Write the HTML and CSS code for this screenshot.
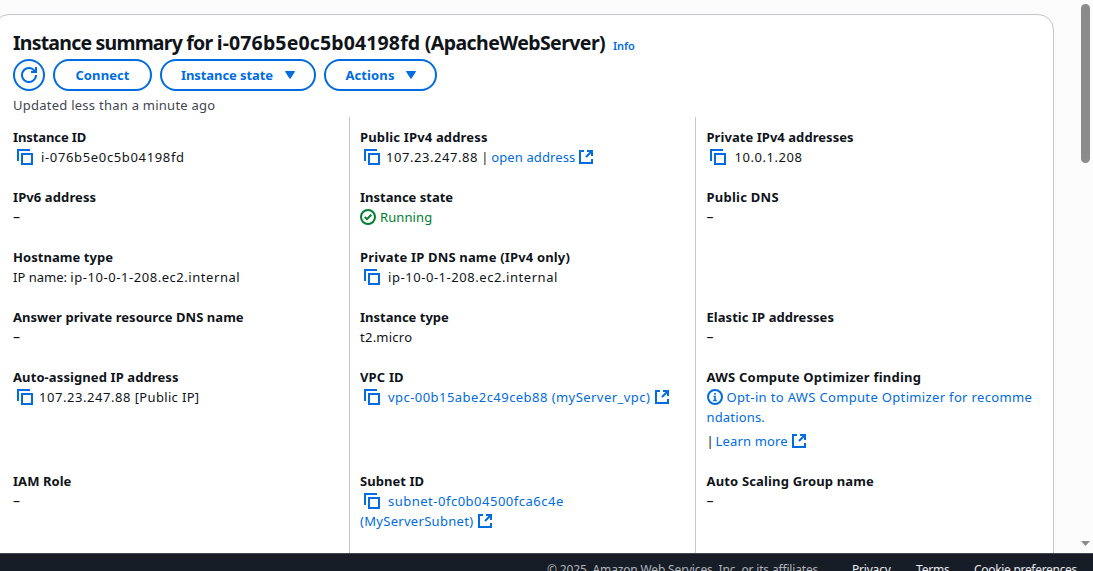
FILE: index.html
```html
<!DOCTYPE html>
<html lang="en">
<head>
<meta charset="utf-8">
<title>Instance summary</title>
<link rel="stylesheet" href="styles.css">
</head>
<body>
<svg class="defs" aria-hidden="true">
  <symbol id="copy" viewBox="0 0 16 16"><path d="M1 12V1h12"/><path d="M5 5h10v10H5z"/></symbol>
  <symbol id="ext" viewBox="0 0 16 16"><path d="M6 2H2v12h12v-4"/><path d="M9 2h5v5M14 2 8 8"/></symbol>
  <symbol id="ok" viewBox="0 0 16 16"><circle cx="8" cy="8" r="7"/><path d="m4.8 8 2.2 2.2 4.3-4.4"/></symbol>
  <symbol id="info" viewBox="0 0 16 16"><circle cx="8" cy="8" r="7"/><path stroke-width="1.6" d="M8 4v1.800M6.500 7.500H8v4M6.200 11.500h3.600"/></symbol>
</svg>
<main class="viewport">
  <section class="card">
    <h1 class="title"><span class="title-text"><span class="lead">Instance summary for </span><span class="id">i-076b5e0c5b04198fd</span><span class="name"> (ApacheWebServer)</span></span><a class="title-info">Info</a></h1>
    <div class="actions">
      <button class="btn refresh" aria-label="Refresh"><svg class="icon" viewBox="0 0 16 16"><path d="M15 8a7 7 0 1 1-2-4.9L14.500 5"/><path d="M10 5h5V0"/></svg></button>
      <button class="btn connect">Connect</button>
      <button class="btn state"><span>Instance state</span><svg class="caret" viewBox="0 0 10 8"><path d="M.5.5h9L5 7.500z"/></svg></button>
      <button class="btn menu"><span>Actions</span><svg class="caret" viewBox="0 0 10 8"><path d="M.5.5h9L5 7.500z"/></svg></button>
    </div>
    <p class="updated">Updated less than a minute ago</p>
    <div class="grid">
      <div class="cell"><h2 class="n10">Instance ID</h2><p><svg class="icon copy"><use href="#copy"/></svg><span class="w65">i-076b5e0c5b04198fd</span></p></div>
      <div class="cell"><h2 class="w15">Public IPv4 address</h2><p><svg class="icon copy tight"><use href="#copy"/></svg><span class="w55">107.23.247.88</span><span class="bar"> | </span><a class="w10">open address</a><svg class="icon ext"><use href="#ext"/></svg></p></div>
      <div class="cell"><h2 class="w05">Private IPv4 addresses</h2><p><svg class="icon copy short"><use href="#copy"/></svg><span class="w55">10.0.1.208</span></p></div>

      <div class="cell"><h2 class="w10">IPv6 address</h2><p class="empty">–</p></div>
      <div class="cell"><h2>Instance state</h2><p class="running"><svg class="icon status"><use href="#ok"/></svg><span class="w10">Running</span></p></div>
      <div class="cell"><h2 class="w25">Public DNS</h2><p class="empty">–</p></div>

      <div class="cell"><h2 class="w05">Hostname type</h2><p><span>IP name: </span><span class="w55">ip-10-0-1-208.ec2.internal</span></p></div>
      <div class="cell"><h2 class="w15">Private IP DNS name (IPv4 only)</h2><p><svg class="icon copy"><use href="#copy"/></svg><span class="w55">ip-10-0-1-208.ec2.internal</span></p></div>
      <div class="cell"></div>

      <div class="cell"><h2 class="w05">Answer private resource DNS name</h2><p class="empty">–</p></div>
      <div class="cell"><h2>Instance type</h2><p class="w25">t2.micro</p></div>
      <div class="cell"><h2 class="w05">Elastic IP addresses</h2><p class="empty">–</p></div>

      <div class="cell"><h2 class="w10">Auto-assigned IP address</h2><p><svg class="icon copy tight"><use href="#copy"/></svg><span class="w55">107.23.247.88</span><span class="w35"> [Public IP]</span></p></div>
      <div class="cell"><h2 class="w15">VPC ID</h2><p><svg class="icon copy"><use href="#copy"/></svg><a class="w45">vpc-00b15abe2c49ceb88 (myServer_vpc)</a><svg class="icon ext far"><use href="#ext"/></svg></p></div>
      <div class="cell"><h2 class="w20">AWS Compute Optimizer finding</h2><p><svg class="icon status"><use href="#info"/></svg><a class="w35">Opt-in to AWS Compute Optimizer for recomme</a></p><p><a class="w15">ndations.</a></p><p class="more"><span class="pipe">| </span><a class="w15">Learn more</a><svg class="icon ext"><use href="#ext"/></svg></p></div>

      <div class="cell"><h2 class="w05">IAM Role</h2><p class="empty">–</p></div>
      <div class="cell"><h2 class="w05">Subnet ID</h2><p><svg class="icon copy"><use href="#copy"/></svg><a class="w50">subnet-0fc0b04500fca6c4e</a></p><p><a class="w30">(MyServerSubnet)</a><svg class="icon ext far"><use href="#ext"/></svg></p></div>
      <div class="cell"><h2 class="w15">Auto Scaling Group name</h2><p class="empty">–</p></div>
    </div>
  </section>
  <div class="scrollbar"><div class="thumb"></div><svg class="down" viewBox="0 0 9 5"><path d="M0 0h9L4.500 5z"/></svg></div>
</main>
<footer class="footer">
  <span class="copyright">© 2025, Amazon Web Services, Inc. or its affiliates.</span>
  <a class="privacy">Privacy</a><a class="terms">Terms</a><a class="cookies">Cookie preferences</a>
</footer>
</body>
</html>
```
FILE: styles.css
```css
* { box-sizing: border-box; margin: 0; padding: 0; }
body {
  width: 1093px; height: 571px; overflow: hidden;
  display: flex; flex-direction: column;
  background: #fcfcfd; color: #0f141a;
  font: 13px/20px "Noto Sans", sans-serif;
}
.defs { display: none; }
a { color: #006ce0; }
.viewport { height: 553px; display: flex; justify-content: space-between; overflow: hidden; }
.card {
  width: 1061px; height: 620px; margin: 14px 0 0 -7px; flex: none;
  padding: 16px 19px 0; border: 1px solid #c6c6cd; border-radius: 16px; background: #fff;
}
.title { display: flex; align-items: baseline; height: 24px; font-size: 19.5px; line-height: 24px; white-space: pre; }
.title-text { width: 600px; }
.lead { letter-spacing: -.79px; }
.id { letter-spacing: .14px; }
.name { letter-spacing: -.58px; }
.title-info { font-size: 11px; font-weight: 600; letter-spacing: -.05px; }
.actions { display: flex; gap: 8px; margin-top: 4px; }
.btn {
  display: flex; align-items: center; justify-content: center; height: 32px;
  border: 2px solid #006ce0; border-radius: 16px; background: #fff; color: #006ce0;
  font: bold 13px/20px "Noto Sans", sans-serif; white-space: nowrap;
}
.refresh { width: 32px; }
.connect { width: 99px; letter-spacing: .1px; }
.state { width: 156px; gap: 12px; letter-spacing: -.08px; }
.menu { width: 113px; gap: 11px; letter-spacing: .1px; }
.caret { width: 10px; height: 8px; fill: #006ce0; stroke: #006ce0; stroke-linejoin: round; }
.icon { width: 16px; height: 16px; flex: none; fill: none; stroke: #006ce0; stroke-width: 2; }
.updated { margin-top: 4px; color: #424650; letter-spacing: .25px; }
.grid { display: grid; grid-template-columns: 336px 346px 337px; margin-top: 2px; }
.cell { min-height: 60px; padding-bottom: 20px; white-space: nowrap; }
.cell:nth-child(-n+3) { padding-top: 10px; min-height: 70px; }
.cell:nth-child(3n+2), .cell:nth-child(3n) { padding-left: 10px; border-left: 1px solid #c6c6cd; }
.cell:nth-child(3n) { padding-left: 10.5px; }
.cell:nth-last-child(-n+3) { padding-bottom: 60px; }
.cell h2 { font-size: 13px; line-height: 20px; }
.cell p { display: flex; align-items: center; height: 20px; white-space: pre; }
.cell .empty { font-size: 14px; }
.copy { margin: 0 8px 0 4px; }
.copy.tight { margin-right: 6px; }
.copy.short { margin: 0 8.5px 0 3.5px; }
.ext { margin-left: 3px; }
.ext.far { margin-left: 4px; }
.status { margin-right: 4px; }
.running { color: #00802f; }
.running .icon { stroke: #00802f; }
.cell .more { margin-top: 4px; }
.bar { letter-spacing: -.2px; }
.pipe { letter-spacing: -.75px; }
.n10 { letter-spacing: -.1px; }
.w05 { letter-spacing: .05px; }
.w10 { letter-spacing: .1px; }
.w15 { letter-spacing: .16px; }
.w20 { letter-spacing: .22px; }
.w25 { letter-spacing: .25px; }
.w30 { letter-spacing: .3px; }
.w35 { letter-spacing: .34px; }
.w45 { letter-spacing: .45px; }
.w50 { letter-spacing: .5px; }
.w55 { letter-spacing: .55px; }
.w65 { letter-spacing: .65px; }
.scrollbar { width: 12px; display: flex; flex-direction: column; justify-content: space-between; padding: 4px 3px 7px 0; }
.thumb { width: 9px; height: 159px; border-radius: 5px; background: #8b8b8b; }
.down { width: 9px; height: 5px; fill: #8b8b8b; }
.footer {
  display: flex; height: 18px; padding: 8px 0 0 547px; overflow: hidden;
  border-top: 1px solid #424650; background: #161d26; color: #b4b4bb;
  font-size: 12px; line-height: 16px; white-space: nowrap;
}
.footer a { color: #ebebf0; letter-spacing: -.2px; }
.copyright { width: 305px; letter-spacing: -.16px; }
.privacy { width: 64px; }
.terms { width: 58px; }
.footer .cookies { letter-spacing: -.3px; }
```
